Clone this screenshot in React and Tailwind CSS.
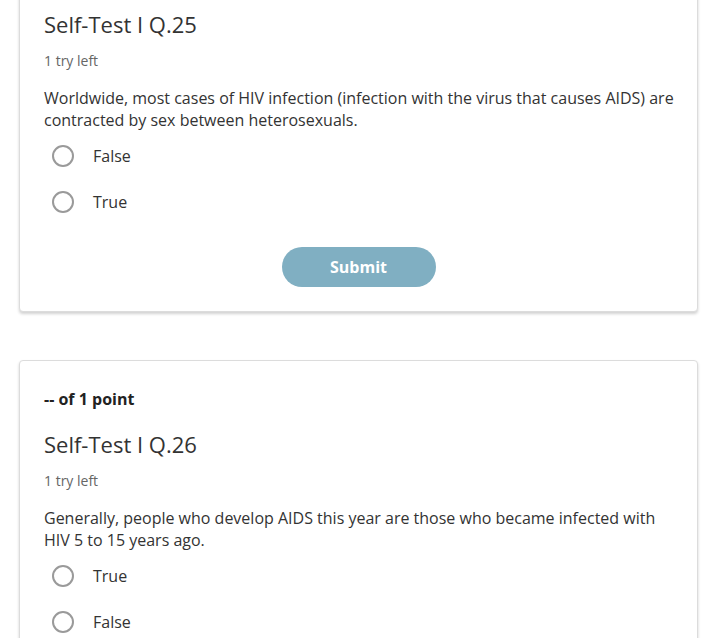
import { useState } from "react";

const questions = [
  {
    id: "q25",
    points: null,
    title: "Self-Test I Q.25",
    text: "Worldwide, most cases of HIV infection (infection with the virus that causes AIDS) are contracted by sex between heterosexuals.",
    options: ["False", "True"],
    submit: true,
  },
  {
    id: "q26",
    points: "-- of 1 point",
    title: "Self-Test I Q.26",
    text: "Generally, people who develop AIDS this year are those who became infected with HIV 5 to 15 years ago.",
    options: ["True", "False"],
    submit: false,
  },
];

function Question({ q, first }) {
  const [picked, setPicked] = useState(null);

  return (
    <div
      className={`bg-white border border-[#dcdcdc] rounded-[4px] shadow-[0_2px_3px_rgba(0,0,0,0.18)] pl-6 pr-[18px] ${
        first ? "-mt-4 pt-[24px] pb-6" : "mt-12 pt-[27px] pb-6"
      }`}
    >
      {q.points && (
        <p className="text-[16px] leading-[22px] font-bold text-[#222] mb-[19px]">{q.points}</p>
      )}
      <h2 className="text-[22px] leading-[30px] text-[#333]">{q.title}</h2>
      <p className="text-[14px] leading-[20px] text-[#666] mt-3">1 try left</p>
      <p className="text-[16px] leading-[22px] text-[#333] mt-4">{q.text}</p>
      <div className="mt-[2px]">
        {q.options.map((opt) => (
          <label key={opt} className="flex items-center h-[46px] pl-2 cursor-pointer">
            <span className="w-[22px] h-[22px] rounded-full border-2 border-[#9a9a9a] flex items-center justify-center">
              {picked === opt && <span className="w-[10px] h-[10px] rounded-full bg-[#555]" />}
            </span>
            <input
              type="radio"
              name={q.id}
              className="hidden"
              checked={picked === opt}
              onChange={() => setPicked(opt)}
            />
            <span className="ml-[19px] text-[16px] text-[#333]">{opt}</span>
          </label>
        ))}
      </div>
      {q.submit && (
        <div className="flex justify-center mt-[22px] pr-[6px]">
          <button className="w-[154px] h-[40px] rounded-full bg-[#80afc2] text-white font-bold text-[16px]">
            Submit
          </button>
        </div>
      )}
    </div>
  );
}

export default function App() {
  return (
    <div
      className="bg-white min-h-screen overflow-hidden h-[638px] pl-[19px] pr-[22px]"
      style={{ fontFamily: '"Open Sans", sans-serif' }}
    >
      {questions.map((q, i) => (
        <Question key={q.id} q={q} first={i === 0} />
      ))}
    </div>
  );
}
